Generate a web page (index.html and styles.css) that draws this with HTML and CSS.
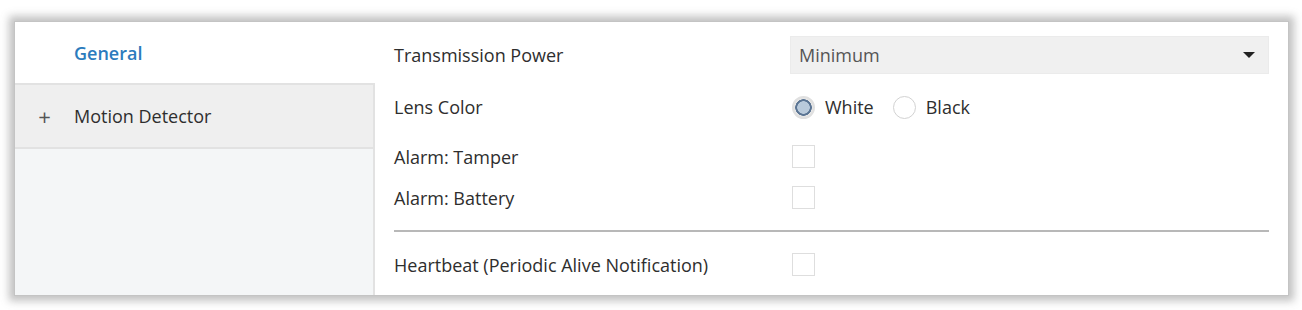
FILE: index.html
```html
<!DOCTYPE html>
<html lang="en">
<head>
    <meta charset="UTF-8">
    <title>Device Parameters</title>
    <link rel="stylesheet" href="styles.css">
</head>
<body>

    <div class="window">
        <div class="sidebar">
            <div class="nav-item active">
                <span class="nav-icon"></span>
                <span>General</span>
            </div>
            <div class="nav-item">
                <span class="nav-icon">+</span>
                <span>Motion Detector</span>
            </div>
            <div class="nav-fill"></div>
        </div>

        <div class="params">
            <div class="row row-select">
                <span class="label">Transmission Power</span>
                <div class="select">
                    <span>Minimum</span>
                    <span class="caret"></span>
                </div>
            </div>
            <div class="row row-radio">
                <span class="label">Lens Color</span>
                <div class="radios">
                    <span class="radio checked"></span><span class="radio-text">White</span>
                    <span class="radio"></span><span class="radio-text">Black</span>
                </div>
            </div>
            <div class="row row-check">
                <span class="label">Alarm: Tamper</span>
                <span class="check"></span>
            </div>
            <div class="row row-check">
                <span class="label">Alarm: Battery</span>
                <span class="check"></span>
            </div>
            <div class="separator"></div>
            <div class="row row-check">
                <span class="label">Heartbeat (Periodic Alive Notification)</span>
                <span class="check"></span>
            </div>
        </div>
    </div>

</body>
</html>
```

FILE: styles.css
```css
/* Parameter window - light desktop theme */
:root {
    --text: #2e2e2e;
    --accent: #2b7bbd;
    --side-bg: #f4f6f7;
    --row-bg: #efefef;
}

html, body {
    margin: 0;
    height: 100%;
    overflow: hidden;
    background: #fff;
}

body {
    font-family: "Open Sans", "Noto Sans", sans-serif;
    font-size: 18px;
    color: var(--text);
    padding: 22px 14px 15px 15px;
    box-sizing: border-box;
}

.window {
    display: flex;
    height: 273px;
    background: #fff;
    box-shadow: 0 0 0 1px #c4c4c4, 0 0 8px 6px rgba(110, 110, 110, 0.42);
}

/* left navigation */
.sidebar {
    width: 360px;
    display: flex;
    flex-direction: column;
}

.nav-item {
    height: 62px;
    display: flex;
    align-items: center;
    background: var(--row-bg);
    border-bottom: 2px solid #e2e2e2;
    border-right: 2px solid #e2e2e2;
}

.nav-item.active {
    height: 61px;
    background: #fff;
    border-right: none;
    color: var(--accent);
    font-weight: 600;
}

.nav-icon {
    width: 59px;
    text-align: center;
    font-size: 22px;
    color: #555;
    line-height: 1;
}

.nav-fill {
    flex: 1;
    background: var(--side-bg);
    border-right: 2px solid #e2e2e2;
}

/* right parameter list */
.params {
    flex: 1;
    padding: 15px 19px 0 19px;
}

.row {
    display: flex;
    align-items: center;
}

.label {
    width: 396px;
}

.row-select {
    height: 36px;
    margin-bottom: 16px;
}

.select {
    flex: 1;
    height: 36px;
    display: flex;
    align-items: center;
    justify-content: space-between;
    padding: 0 13px 0 8px;
    background: #f0f0f0;
    border: 1px solid #ebebeb;
    color: #555;
}

.caret {
    width: 0;
    height: 0;
    border-left: 6px solid transparent;
    border-right: 6px solid transparent;
    border-top: 6px solid #222;
}

.row-radio {
    height: 36px;
    margin-bottom: 11px;
}

.radios {
    display: flex;
    align-items: center;
    padding-left: 2px;
}

.radio {
    width: 23px;
    height: 23px;
    box-sizing: border-box;
    border: 1px solid #d2d2d2;
    border-radius: 50%;
    background: #fff;
    margin-right: 10px;
}

.radio.checked {
    border: 2px solid #e0e0e0;
    background: radial-gradient(circle, #b9cadb 0 6px, #5b7594 6.5px 8px, #e6e6e6 8.5px);
}

.radio-text {
    margin-right: 19px;
}

.row-check {
    height: 41px;
}

.check {
    width: 23px;
    height: 23px;
    box-sizing: border-box;
    border: 1px solid #dedede;
    background: #fff;
    margin-left: 2px;
}

.separator {
    height: 2px;
    background: #b8b8b8;
    margin: 12px 0 12px;
}
```
